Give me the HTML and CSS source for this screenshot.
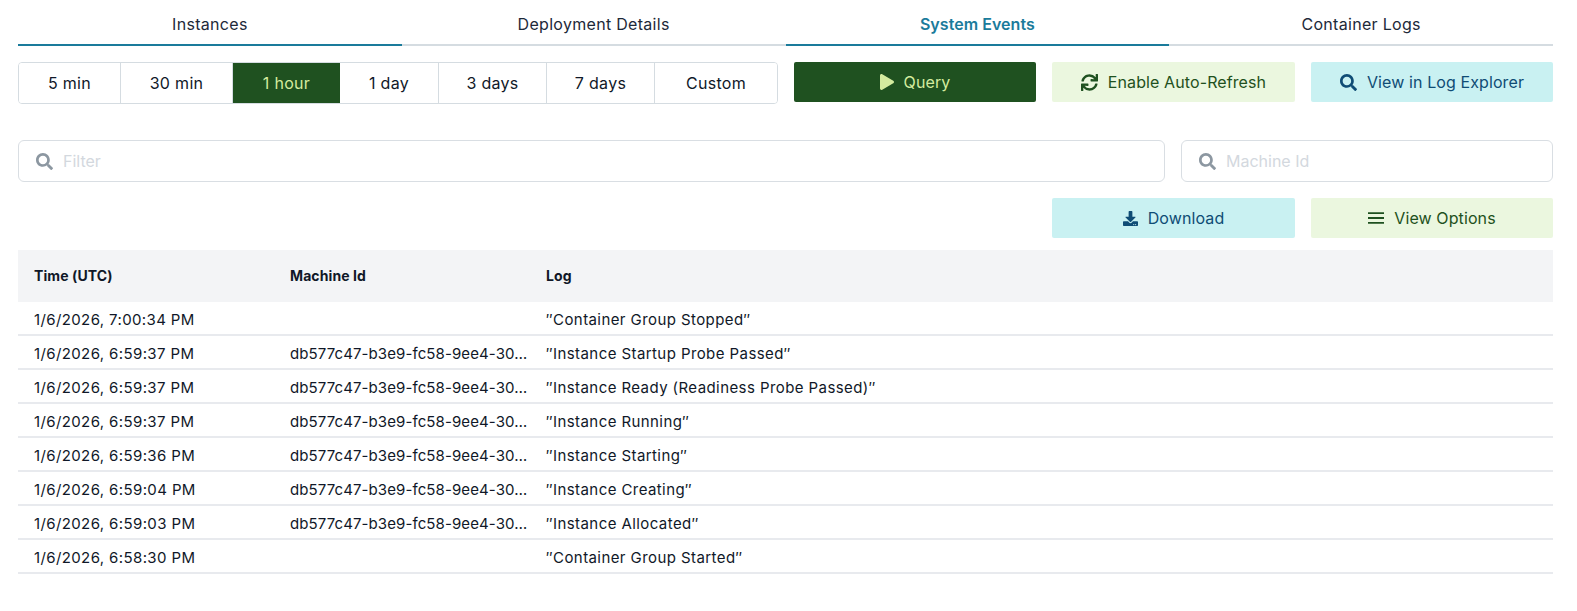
FILE: index.html
```html
<!DOCTYPE html>
<html lang="en">
<head>
<meta charset="utf-8">
<title>System Events</title>
<link rel="stylesheet" href="styles.css">
</head>
<body>
<svg class="defs" width="0" height="0" aria-hidden="true">
  <symbol id="i-search" viewBox="0 0 512 512"><path d="M505 442.7L405.3 343c-4.5-4.5-10.6-7-17-7H372c27.6-35.3 44-79.7 44-128C416 93.1 322.9 0 208 0S0 93.1 0 208s93.1 208 208 208c48.3 0 92.7-16.4 128-44v16.3c0 6.4 2.5 12.5 7 17l99.7 99.7c9.4 9.4 24.6 9.4 33.9 0l28.3-28.3c9.4-9.4 9.4-24.6.1-34zM208 336c-70.7 0-128-57.2-128-128 0-70.7 57.2-128 128-128 70.7 0 128 57.2 128 128 0 70.7-57.2 128-128 128z"/></symbol>
  <symbol id="i-sync" viewBox="0 0 512 512"><path d="M440.65 12.57l4 82.77A247.16 247.16 0 0 0 255.83 8C134.73 8 33.91 94.92 12.29 209.82A12 12 0 0 0 24.09 224h49.05a12 12 0 0 0 11.67-9.26 175.91 175.91 0 0 1 317-56.94l-101.46-4.86a12 12 0 0 0-12.57 12v47.41a12 12 0 0 0 12 12H500a12 12 0 0 0 12-12V12a12 12 0 0 0-12-12h-47.37a12 12 0 0 0-11.98 12.57zM255.83 432a175.61 175.61 0 0 1-146-77.8l101.8 4.87a12 12 0 0 0 12.57-12v-47.4a12 12 0 0 0-12-12H12a12 12 0 0 0-12 12V500a12 12 0 0 0 12 12h47.35a12 12 0 0 0 12-12.6l-4.15-82.57A247.17 247.17 0 0 0 255.83 504c121.11 0 221.93-86.92 243.55-201.82a12 12 0 0 0-11.8-14.18h-49.05a12 12 0 0 0-11.67 9.26A175.86 175.86 0 0 1 255.83 432z"/></symbol>
  <symbol id="i-play" viewBox="0 0 448 512"><path d="M424.4 214.7L72.4 6.6C43.8-10.3 0 6.1 0 47.9V464c0 37.5 40.7 60.1 72.4 41.3l352-208c31.4-18.5 31.5-64.1 0-82.6z"/></symbol>
  <symbol id="i-download" viewBox="0 0 512 512"><path d="M216 0h80c13.3 0 24 10.7 24 24v168h87.7c17.8 0 26.7 21.5 14.1 34.1L269.7 378.3c-7.5 7.5-19.8 7.5-27.3 0L90.1 226.1c-12.6-12.6-3.7-34.1 14.1-34.1H192V24c0-13.3 10.7-24 24-24zm296 376v112c0 13.3-10.7 24-24 24H24c-13.3 0-24-10.7-24-24V376c0-13.3 10.7-24 24-24h146.7l49 49c20.1 20.1 52.5 20.1 72.6 0l49-49H488c13.3 0 24 10.7 24 24zm-124 88c0-11-9-20-20-20s-20 9-20 20 9 20 20 20 20-9 20-20zm64 0c0-11-9-20-20-20s-20 9-20 20 9 20 20 20 20-9 20-20z"/></symbol>
  <symbol id="i-bars" viewBox="0 0 16 16"><path d="M0 2.2h16v1.8H0zM0 7.1h16v1.8H0zM0 12h16v1.8H0z"/></symbol>
</svg>

<nav class="tabs">
  <a class="tab tab-under">Instances</a>
  <a class="tab">Deployment Details</a>
  <a class="tab tab-active tab-under">System Events</a>
  <a class="tab">Container Logs</a>
</nav>

<section class="toolbar">
  <div class="segments">
    <button class="seg seg-5">5 min</button>
    <button class="seg seg-30">30 min</button>
    <button class="seg seg-1h seg-on">1 hour</button>
    <button class="seg seg-1d">1 day</button>
    <button class="seg seg-3d">3 days</button>
    <button class="seg seg-7d">7 days</button>
    <button class="seg seg-c">Custom</button>
  </div>
  <button class="btn btn-dark"><svg class="ic ic-play"><use href="#i-play"/></svg>Query</button>
  <button class="btn btn-green"><svg class="ic"><use href="#i-sync"/></svg>Enable Auto-Refresh</button>
  <button class="btn btn-cyan"><svg class="ic"><use href="#i-search"/></svg>View in Log Explorer</button>
</section>

<section class="filters">
  <label class="field"><svg class="ic ic-field"><use href="#i-search"/></svg><input class="input" placeholder="Filter"></label>
  <label class="field"><svg class="ic ic-field"><use href="#i-search"/></svg><input class="input" placeholder="Machine Id"></label>
</section>

<section class="actions">
  <button class="btn btn-cyan btn-action"><svg class="ic ic-small"><use href="#i-download"/></svg>Download</button>
  <button class="btn btn-green btn-action"><svg class="ic ic-bars"><use href="#i-bars"/></svg>View Options</button>
</section>

<table class="events">
  <colgroup><col class="col-fixed"><col class="col-fixed"><col></colgroup>
  <thead>
    <tr><th>Time (UTC)</th><th>Machine Id</th><th>Log</th></tr>
  </thead>
  <tbody>
    <tr><td>1/6/2026, 7:00:34 PM</td><td></td><td class="log">″Container Group Stopped″</td></tr>
    <tr><td>1/6/2026, 6:59:37 PM</td><td class="clip">db577c47-b3e9-fc58-9ee4-30…</td><td class="log">″Instance Startup Probe Passed″</td></tr>
    <tr><td>1/6/2026, 6:59:37 PM</td><td class="clip">db577c47-b3e9-fc58-9ee4-30…</td><td class="log">″Instance Ready (Readiness Probe Passed)″</td></tr>
    <tr><td>1/6/2026, 6:59:37 PM</td><td class="clip">db577c47-b3e9-fc58-9ee4-30…</td><td class="log">″Instance Running″</td></tr>
    <tr><td>1/6/2026, 6:59:36 PM</td><td class="clip">db577c47-b3e9-fc58-9ee4-30…</td><td class="log">″Instance Starting″</td></tr>
    <tr><td>1/6/2026, 6:59:04 PM</td><td class="clip">db577c47-b3e9-fc58-9ee4-30…</td><td class="log">″Instance Creating″</td></tr>
    <tr><td>1/6/2026, 6:59:03 PM</td><td class="clip">db577c47-b3e9-fc58-9ee4-30…</td><td class="log">″Instance Allocated″</td></tr>
    <tr><td>1/6/2026, 6:58:30 PM</td><td></td><td class="log">″Container Group Started″</td></tr>
  </tbody>
</table>
</body>
</html>
```

FILE: styles.css
```css
* { box-sizing: border-box; }
html, body { margin: 0; background: #fff; }
body {
  padding: 0 24px 0 18px;
  font-family: "Inter", "Noto Sans", sans-serif;
  font-size: 15px;
  color: #101828;
}
.defs { position: absolute; }
.tabs {
  display: grid;
  grid-template-columns: repeat(4, 1fr);
  height: 46px;
}
.tab {
  display: flex;
  align-items: center;
  justify-content: center;
  padding-top: 3px;
  border-bottom: 2px solid #d5dce1;
  font-size: 16px;
  letter-spacing: 0.3px;
  color: #1d2939;
}
.tab-under { border-bottom-color: #1a7b9b; }
.tab-active { color: #1a7b9b; font-weight: 600; letter-spacing: 0.05px; }

.toolbar {
  display: grid;
  grid-template-columns: 760px 242px 243px 1fr;
  gap: 16px;
  align-items: start;
  margin-top: 16px;
}
.segments {
  display: flex;
  height: 42px;
  border: 1px solid #d5dce1;
  border-radius: 4px;
  overflow: hidden;
}
.seg {
  flex: none;
  border: 0;
  border-right: 1px solid #d5dce1;
  background: #fff;
  padding: 0;
  font: inherit;
  font-size: 16px;
  letter-spacing: 0.3px;
  color: #101828;
}
.seg:last-child { border-right: 0; }
.seg-5 { width: 102px; }
.seg-30 { width: 112px; }
.seg-1h { width: 107px; }
.seg-1d { width: 99px; }
.seg-3d { width: 108px; }
.seg-7d { width: 108px; }
.seg-c { flex: 1; }
.seg-on { background: #1f5120; color: #d4ec9f; border-right: 0; }

.btn {
  display: flex;
  align-items: center;
  justify-content: center;
  gap: 10px;
  height: 40px;
  border: 0;
  border-radius: 2px;
  padding: 0;
  font: inherit;
  font-size: 16px;
  letter-spacing: 0.1px;
}
.btn-dark { background: #1f5120; color: #d4ec9f; }
.btn-green { background: #ebf7df; color: #1f5120; }
.btn-cyan { background: #c9f1f2; color: #0f4c75; }
.ic { width: 17px; height: 17px; fill: currentColor; flex: none; }
.ic-play { width: 14px; height: 16px; }
.ic-small { width: 15px; height: 15px; }
.ic-bars { width: 16px; height: 16px; }

.filters {
  display: grid;
  grid-template-columns: 1147px 1fr;
  gap: 16px;
  margin-top: 36px;
}
.field {
  display: flex;
  align-items: center;
  gap: 10px;
  height: 42px;
  padding: 0 17px;
  border: 1px solid #d9dee3;
  border-radius: 6px;
}
.ic-field { width: 17px; height: 17px; fill: #8c97a1; }
.input {
  flex: 1;
  min-width: 0;
  border: 0;
  outline: 0;
  padding: 0;
  font: inherit;
  font-size: 16px;
  color: #101828;
  background: transparent;
}
.input::placeholder { color: #d3d8de; opacity: 1; }

.actions {
  display: flex;
  justify-content: flex-end;
  gap: 16px;
  margin-top: 16px;
}
.btn-action { width: 243px; }
.btn-action:last-child { width: 242px; }

.events {
  width: 100%;
  margin-top: 12px;
  border-collapse: separate;
  border-spacing: 0;
  table-layout: fixed;
}
.col-fixed { width: 256px; }
th {
  height: 52px;
  padding: 0 16px 2px;
  background: #f3f4f6;
  text-align: left;
  font-size: 14px;
  font-weight: 700;
  letter-spacing: 0.1px;
  color: #101828;
}
td {
  height: 34px;
  padding: 2px 16px 0;
  border-bottom: 2px solid #e8eaee;
  letter-spacing: 0.38px;
  white-space: nowrap;
}
td.clip { padding-right: 0; letter-spacing: 0.1px; }
td.log { letter-spacing: 0.42px; }
```
